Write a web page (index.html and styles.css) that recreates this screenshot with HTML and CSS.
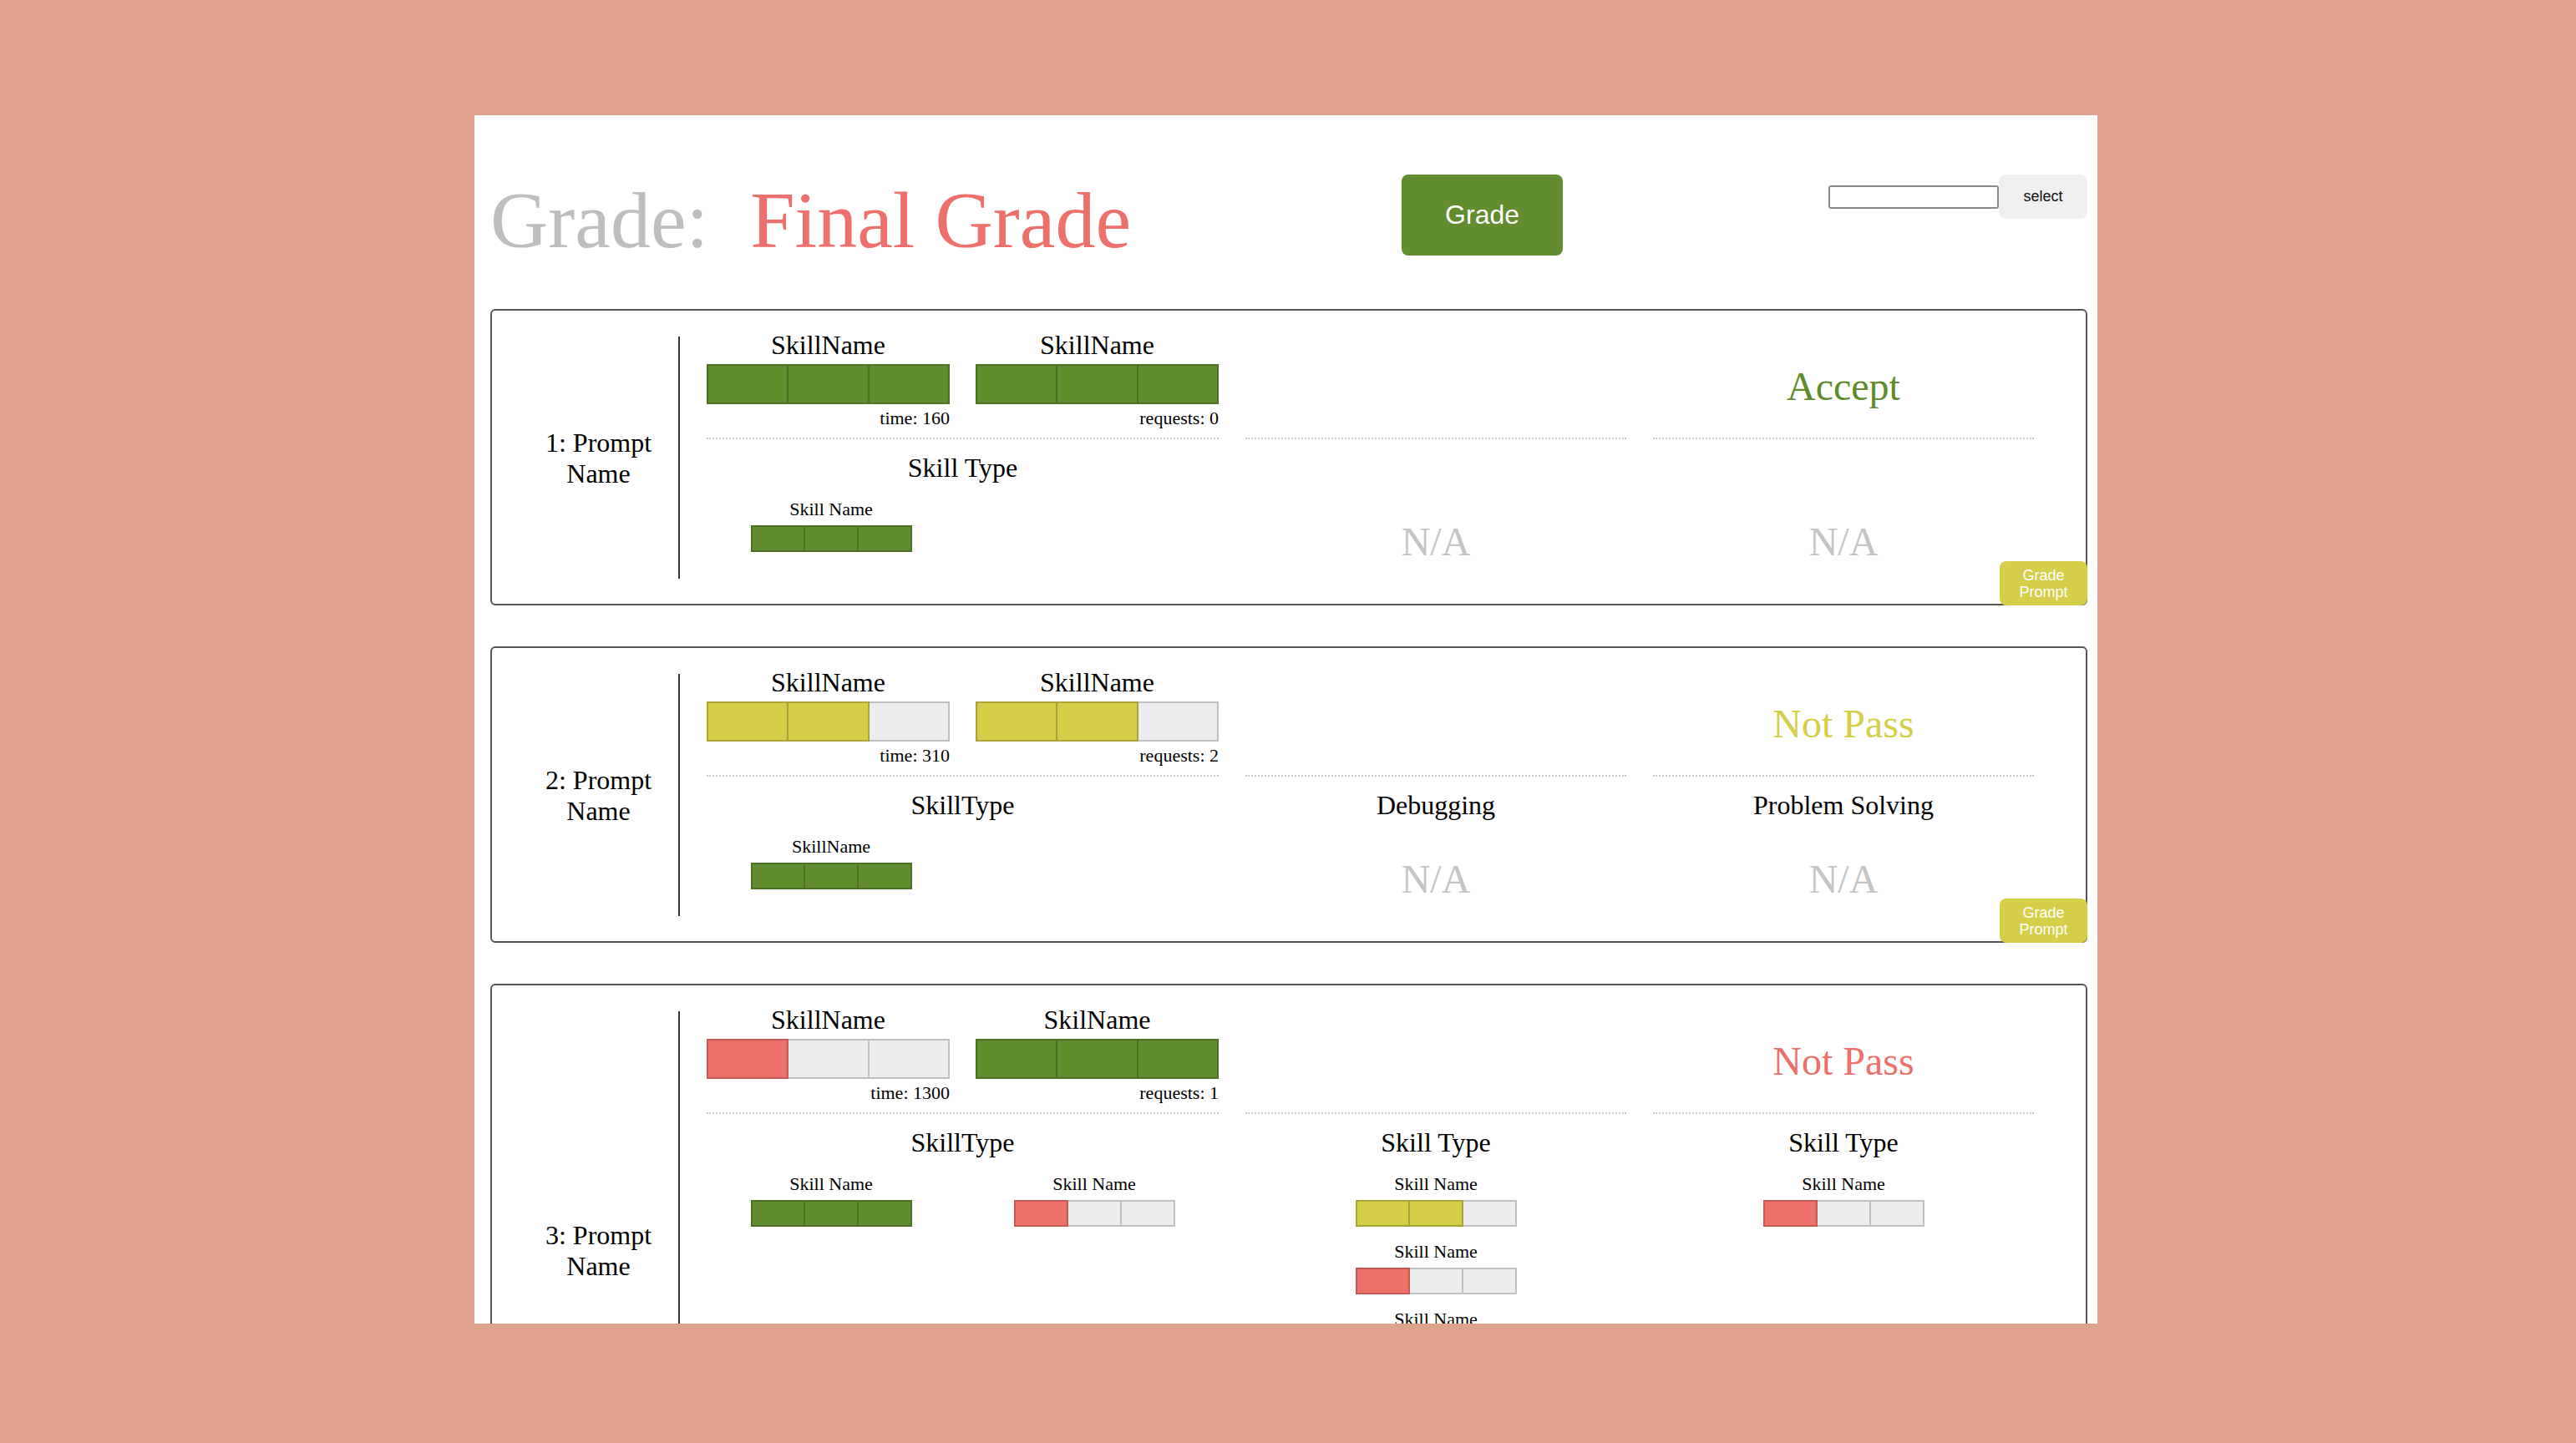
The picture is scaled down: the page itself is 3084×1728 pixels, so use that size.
FILE: index.html
```html
<!DOCTYPE html>
<html lang="en">

<head>
  <meta charset="UTF-8">
  <title>Grade</title>
  <link rel="stylesheet" href="styles.css">
</head>

<body>

  <div class="grade-frame">

    <!-- Cabecera -->
    <header class="grade-head">
      <h1 class="grade-title"><span class="grade-label">Grade:</span><span class="grade-final">Final Grade</span></h1>
      <button class="grade-btn">Grade</button>
      <div class="grade-pick">
        <input class="grade-input" type="text">
        <button class="grade-select">select</button>
      </div>
    </header>

    <!-- Prompt 1 -->
    <section class="prompt-card">
      <div class="prompt-name">1: Prompt Name</div>
      <div class="prompt-rule"></div>
      <div class="prompt-grid">
        <div class="cell cell-top meters">
          <div class="meter">
            <div class="meter-name">SkillName</div>
            <div class="bar bar-lg"><span class="seg green"></span><span class="seg green"></span><span class="seg green"></span></div>
            <div class="meter-note">time: 160</div>
          </div>
          <div class="meter">
            <div class="meter-name">SkillName</div>
            <div class="bar bar-lg"><span class="seg green"></span><span class="seg green"></span><span class="seg green"></span></div>
            <div class="meter-note">requests: 0</div>
          </div>
        </div>
        <div class="cell cell-top"></div>
        <div class="cell cell-top verdict verdict-accept">Accept</div>

        <div class="cell">
          <div class="type-name">Skill Type</div>
          <div class="skills skills-2">
            <div class="skill">
              <div class="skill-name">Skill Name</div>
              <div class="bar bar-sm"><span class="seg green"></span><span class="seg green"></span><span class="seg green"></span></div>
            </div>
          </div>
        </div>
        <div class="cell">
          <div class="type-name"></div>
          <div class="na">N/A</div>
        </div>
        <div class="cell">
          <div class="type-name"></div>
          <div class="na">N/A</div>
        </div>
      </div>
      <button class="prompt-grade">Grade<br>Prompt</button>
    </section>

    <!-- Prompt 2 -->
    <section class="prompt-card">
      <div class="prompt-name">2: Prompt Name</div>
      <div class="prompt-rule"></div>
      <div class="prompt-grid">
        <div class="cell cell-top meters">
          <div class="meter">
            <div class="meter-name">SkillName</div>
            <div class="bar bar-lg"><span class="seg yellow"></span><span class="seg yellow"></span><span class="seg"></span></div>
            <div class="meter-note">time: 310</div>
          </div>
          <div class="meter">
            <div class="meter-name">SkillName</div>
            <div class="bar bar-lg"><span class="seg yellow"></span><span class="seg yellow"></span><span class="seg"></span></div>
            <div class="meter-note">requests: 2</div>
          </div>
        </div>
        <div class="cell cell-top"></div>
        <div class="cell cell-top verdict verdict-warn">Not Pass</div>

        <div class="cell">
          <div class="type-name">SkillType</div>
          <div class="skills skills-2">
            <div class="skill">
              <div class="skill-name">SkillName</div>
              <div class="bar bar-sm"><span class="seg green"></span><span class="seg green"></span><span class="seg green"></span></div>
            </div>
          </div>
        </div>
        <div class="cell">
          <div class="type-name">Debugging</div>
          <div class="na">N/A</div>
        </div>
        <div class="cell">
          <div class="type-name">Problem Solving</div>
          <div class="na">N/A</div>
        </div>
      </div>
      <button class="prompt-grade">Grade<br>Prompt</button>
    </section>

    <!-- Prompt 3 -->
    <section class="prompt-card">
      <div class="prompt-name">3: Prompt Name</div>
      <div class="prompt-rule"></div>
      <div class="prompt-grid">
        <div class="cell cell-top meters">
          <div class="meter">
            <div class="meter-name">SkillName</div>
            <div class="bar bar-lg"><span class="seg red"></span><span class="seg"></span><span class="seg"></span></div>
            <div class="meter-note">time: 1300</div>
          </div>
          <div class="meter">
            <div class="meter-name">SkilName</div>
            <div class="bar bar-lg"><span class="seg green"></span><span class="seg green"></span><span class="seg green"></span></div>
            <div class="meter-note">requests: 1</div>
          </div>
        </div>
        <div class="cell cell-top"></div>
        <div class="cell cell-top verdict verdict-fail">Not Pass</div>

        <div class="cell">
          <div class="type-name">SkillType</div>
          <div class="skills skills-2">
            <div class="skill">
              <div class="skill-name">Skill Name</div>
              <div class="bar bar-sm"><span class="seg green"></span><span class="seg green"></span><span class="seg green"></span></div>
            </div>
            <div class="skill">
              <div class="skill-name">Skill Name</div>
              <div class="bar bar-sm"><span class="seg red"></span><span class="seg"></span><span class="seg"></span></div>
            </div>
          </div>
        </div>
        <div class="cell">
          <div class="type-name">Skill Type</div>
          <div class="skills">
            <div class="skill">
              <div class="skill-name">Skill Name</div>
              <div class="bar bar-sm"><span class="seg yellow"></span><span class="seg yellow"></span><span class="seg"></span></div>
            </div>
            <div class="skill">
              <div class="skill-name">Skill Name</div>
              <div class="bar bar-sm"><span class="seg red"></span><span class="seg"></span><span class="seg"></span></div>
            </div>
            <div class="skill">
              <div class="skill-name">Skill Name</div>
              <div class="bar bar-sm"><span class="seg green"></span><span class="seg green"></span><span class="seg green"></span></div>
            </div>
            <div class="skill">
              <div class="skill-name">Skill Name</div>
              <div class="bar bar-sm"><span class="seg yellow"></span><span class="seg yellow"></span><span class="seg"></span></div>
            </div>
            <div class="skill">
              <div class="skill-name">Skill Name</div>
              <div class="bar bar-sm"><span class="seg red"></span><span class="seg"></span><span class="seg"></span></div>
            </div>
          </div>
        </div>
        <div class="cell">
          <div class="type-name">Skill Type</div>
          <div class="skills">
            <div class="skill">
              <div class="skill-name">Skill Name</div>
              <div class="bar bar-sm"><span class="seg red"></span><span class="seg"></span><span class="seg"></span></div>
            </div>
          </div>
        </div>
      </div>
      <button class="prompt-grade">Grade<br>Prompt</button>
    </section>

  </div>

</body>

</html>
```

FILE: styles.css
```css
/* Fondo */
body {
  margin: 0;
  background: #dfa28c;
  font-family: 'Liberation Serif', 'Times New Roman', serif;
  color: #000;
}

/* Ventana blanca */
.grade-frame {
  box-sizing: border-box;
  width: 1943px;
  height: 1447px;
  margin: 138px 0 0 568px;
  padding: 71px 12px 0 19px;
  background: #fff;
  overflow: hidden;
}

/* Cabecera */
.grade-head {
  display: flex;
  align-items: flex-start;
  height: 110px;
  margin-bottom: 51px;
}

.grade-title {
  margin: 0;
  font-size: 96px;
  line-height: 110px;
  font-weight: normal;
  white-space: nowrap;
}

.grade-label {
  color: #bebebe;
}

.grade-final {
  color: #ee706b;
  margin-left: 50px;
}

.grade-btn {
  width: 193px;
  height: 97px;
  margin-left: 324px;
  border: none;
  border-radius: 8px;
  background: #628d2f;
  color: #fff;
  font-family: 'Liberation Sans', Arial, sans-serif;
  font-size: 32px;
  cursor: pointer;
}

.grade-pick {
  display: flex;
  align-items: center;
  margin-left: auto;
  height: 53px;
}

.grade-input {
  box-sizing: border-box;
  width: 204px;
  height: 28px;
  margin: 0;
  padding: 0 4px;
  border: 2px solid #8a8a8a;
  border-radius: 3px;
}

.grade-select {
  width: 106px;
  height: 53px;
  border: none;
  border-radius: 8px;
  background: #efefef;
  color: #111;
  font-family: 'Liberation Sans', Arial, sans-serif;
  font-size: 18px;
  cursor: pointer;
}

/* Tarjeta de prompt */
.prompt-card {
  position: relative;
  display: flex;
  padding: 23px 0 21px 0;
  margin-bottom: 49px;
  border: 2px solid #555;
  border-radius: 6px;
}

.prompt-name {
  align-self: center;
  width: 191px;
  padding-left: 32px;
  font-size: 32px;
  line-height: 37px;
  text-align: center;
}

.prompt-rule {
  width: 2px;
  margin: 8px 0 9px 0;
  background: #333;
}

.prompt-grid {
  display: grid;
  grid-template-columns: 613px 456px 456px;
  column-gap: 32px;
  align-content: start;
  margin-left: 32px;
}

.cell-top {
  border-bottom: 2px dotted #c6c6c6;
}

.meters {
  display: flex;
  gap: 31px;
  padding-bottom: 11px;
}

.meter {
  width: 291px;
}

.meter-name {
  font-size: 32px;
  line-height: 37px;
  text-align: center;
}

.meter-note {
  margin-top: 4px;
  font-size: 22px;
  line-height: 25px;
  text-align: right;
}

.verdict {
  display: flex;
  align-items: center;
  justify-content: center;
  padding-top: 6px;
  font-size: 48px;
  line-height: 55px;
}

.verdict-accept {
  color: #5f8b2d;
}

.verdict-warn {
  color: #d4ce48;
}

.verdict-fail {
  color: #ee706b;
}

.type-name {
  height: 39px;
  margin-top: 15px;
  font-size: 32px;
  line-height: 39px;
  text-align: center;
}

.na {
  margin: 41px 0 26px 0;
  font-size: 48px;
  line-height: 55px;
  color: #c4c4c4;
  text-align: center;
}

.skills {
  display: grid;
  grid-template-columns: 1fr;
}

.skills-2 {
  grid-template-columns: 1fr 1fr;
  column-gap: 17px;
  align-items: start;
}

.skill {
  display: flex;
  flex-direction: column;
  align-items: center;
  padding-top: 17px;
}

.skill-name {
  font-size: 22px;
  line-height: 25px;
}

/* Barras */
.bar {
  display: flex;
}

.bar-lg {
  width: 291px;
  height: 48px;
  margin-top: 4px;
}

.bar-sm {
  width: 193px;
  height: 32px;
  margin-top: 7px;
}

.seg {
  flex: 1;
  box-sizing: border-box;
  border: 2px solid #c0c0c0;
  background: #ededed;
}

.seg + .seg {
  margin-left: -2px;
}

.seg.green {
  position: relative;
  background: #628d2f;
  border-color: #4c7124;
}

.seg.yellow {
  position: relative;
  background: #d4ce48;
  border-color: #a9a43a;
}

.seg.red {
  position: relative;
  background: #ee706b;
  border-color: #c55a55;
}

.prompt-grade {
  position: absolute;
  right: -2px;
  bottom: -2px;
  width: 105px;
  height: 53px;
  padding: 0;
  border: none;
  border-radius: 8px;
  background: #d4ce48;
  color: #fff;
  font-family: 'Liberation Sans', Arial, sans-serif;
  font-size: 18px;
  line-height: 20px;
  cursor: pointer;
}
```
